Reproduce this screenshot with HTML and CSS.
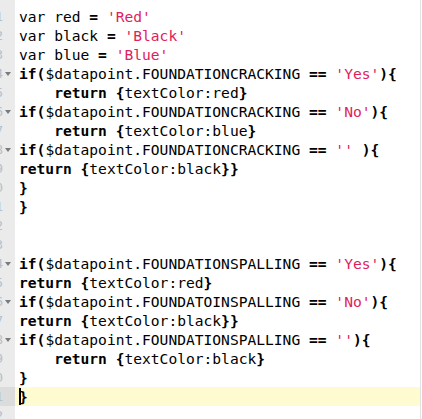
FILE: index.html
```html
<!DOCTYPE html>
<html>
<head>
<meta charset="utf-8">
<link rel="stylesheet" href="styles.css">
</head>
<body>
<div class="editor">
  <div class="gutter">
    <div class="gl"><span class="num">1</span></div>
    <div class="gl"><span class="num">2</span></div>
    <div class="gl"><span class="num">3</span></div>
    <div class="gl"><span class="num">4</span><span class="fold"></span></div>
    <div class="gl"><span class="num">5</span></div>
    <div class="gl"><span class="num">6</span><span class="fold"></span></div>
    <div class="gl"><span class="num">7</span></div>
    <div class="gl"><span class="num">8</span><span class="fold"></span></div>
    <div class="gl"><span class="num">9</span></div>
    <div class="gl"><span class="num">0</span></div>
    <div class="gl"><span class="num">1</span></div>
    <div class="gl"><span class="num">2</span></div>
    <div class="gl"><span class="num">3</span></div>
    <div class="gl"><span class="num">4</span><span class="fold"></span></div>
    <div class="gl"><span class="num">5</span></div>
    <div class="gl"><span class="num">6</span><span class="fold"></span></div>
    <div class="gl"><span class="num">7</span></div>
    <div class="gl"><span class="num">8</span><span class="fold"></span></div>
    <div class="gl"><span class="num">9</span></div>
    <div class="gl"><span class="num">0</span></div>
    <div class="gl active"><span class="num">1</span></div>
    <div class="gl"><span class="num">2</span></div>
  </div>
  <div class="content">
    <div class="ln">var red <b>=</b> <span class="s">'Red'</span></div>
    <div class="ln">var black <b>=</b> <span class="s">'Black'</span></div>
    <div class="ln">var blue <b>=</b> <span class="s">'Blue'</span></div>
    <div class="ln"><b>if</b><b>(</b>$datapoint.FOUNDATIONCRACKING <b>==</b> <span class="s">'Yes'</span><b>){</b></div>
    <div class="ln">    <b>return</b> <b>{</b>textColor:red<b>}</b></div>
    <div class="ln"><b>if</b><b>(</b>$datapoint.FOUNDATIONCRACKING <b>==</b> <span class="s">'No'</span><b>){</b></div>
    <div class="ln">    <b>return</b> <b>{</b>textColor:blue<b>}</b></div>
    <div class="ln"><b>if</b><b>(</b>$datapoint.FOUNDATIONCRACKING <b>==</b> <span class="s">''</span> <b>){</b></div>
    <div class="ln"><b>return</b> <b>{</b>textColor:black<b>}}</b></div>
    <div class="ln"><b>}</b></div>
    <div class="ln"><b>}</b></div>
    <div class="ln"> </div>
    <div class="ln"> </div>
    <div class="ln"><b>if</b><b>(</b>$datapoint.FOUNDATIONSPALLING <b>==</b> <span class="s">'Yes'</span><b>){</b></div>
    <div class="ln"><b>return</b> <b>{</b>textColor:red<b>}</b></div>
    <div class="ln"><b>if</b><b>(</b>$datapoint.FOUNDATOINSPALLING <b>==</b> <span class="s">'No'</span><b>){</b></div>
    <div class="ln"><b>return</b> <b>{</b>textColor:black<b>}}</b></div>
    <div class="ln"><b>if</b><b>(</b>$datapoint.FOUNDATIONSPALLING <b>==</b> <span class="s">''</span><b>){</b></div>
    <div class="ln">    <b>return</b> <b>{</b>textColor:black<b>}</b></div>
    <div class="ln"><b>}</b></div>
    <div class="ln active"><span class="cursor"></span><b>}</b></div>
    <div class="ln"> </div>
  </div>
</div>
</body>
</html>
```

FILE: styles.css
```css
html, body {
  margin: 0;
  padding: 0;
  background: #ffffff;
  overflow: hidden;
}

.editor {
  display: flex;
  width: 422px;
  height: 419px;
  overflow: hidden;
  font-family: "DejaVu Sans Mono", "Liberation Mono", monospace;
  font-size: 14.6px;
  line-height: 19px;
  color: #000000;
}

.gutter {
  width: 15px;
  flex: none;
  background: #ebebeb;
  padding-top: 7px;
  overflow: hidden;
}

.gl {
  height: 19px;
  display: flex;
  align-items: center;
  justify-content: flex-end;
  position: relative;
  font-size: 13px;
  color: #b4c0cc;
}

.gl.active {
  background: #dcdcdc;
}

.num {
  margin-right: 12px;
}

.fold {
  position: absolute;
  left: 5px;
  top: 8px;
  width: 0;
  height: 0;
  border-left: 3px solid transparent;
  border-right: 3px solid transparent;
  border-top: 4px solid #7a7a7a;
}

.content {
  width: 405px;
  flex: none;
  padding-top: 7px;
  border-right: 1px solid #e3e3e3;
}

.ln {
  height: 19px;
  padding-left: 4px;
  white-space: pre;
  position: relative;
}

.ln.active {
  background: #fffbd1;
}

.ln b {
  font-weight: bold;
}

.s {
  color: #e0205a;
}

.cursor {
  position: absolute;
  left: 4px;
  top: 1px;
  width: 2px;
  height: 17px;
  background: #000000;
}
```
